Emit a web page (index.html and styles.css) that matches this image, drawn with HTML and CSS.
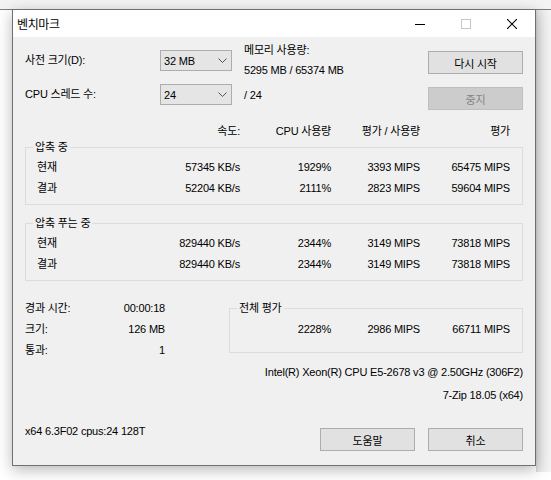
FILE: index.html
```html
<!DOCTYPE html>
<html lang="ko">
<head>
<meta charset="utf-8">
<title>벤치마크</title>
<link rel="stylesheet" href="styles.css">
</head>
<body>
<div class="desk-top"></div>
<div class="desk-right"></div>
<div class="window">
  <div class="titlebar">
    <span class="title">벤치마크</span>
    <div class="caps">
      <span class="cap"><svg width="10" height="10" viewBox="0 0 10 10"><path d="M0 5.5H10" stroke="#000" stroke-width="1"/></svg></span>
      <span class="cap"><svg width="10" height="10" viewBox="0 0 10 10"><rect x="0.5" y="0.5" width="9" height="9" fill="none" stroke="#c6c6c6" stroke-width="1"/></svg></span>
      <span class="cap"><svg width="10" height="10" viewBox="0 0 10 10"><path d="M0 0L10 10M10 0L0 10" stroke="#000" stroke-width="1.1"/></svg></span>
    </div>
  </div>
  <div class="client">
    <div class="row row1">
      <div class="lbl">사전 크기(D):</div>
      <div class="combo"><span>32 MB</span><svg class="chev" width="9" height="5" viewBox="0 0 9 5"><path d="M0.5 0.5L4.5 4.5L8.5 0.5" fill="none" stroke="#555" stroke-width="1"/></svg></div>
      <div class="mem mem1"><div>메모리 사용량:</div><div>5295 MB / 65374 MB</div></div>
      <div class="btn btn-top1">다시 시작</div>
    </div>
    <div class="row row2">
      <div class="lbl">CPU 스레드 수:</div>
      <div class="combo"><span>24</span><svg class="chev" width="9" height="5" viewBox="0 0 9 5"><path d="M0.5 0.5L4.5 4.5L8.5 0.5" fill="none" stroke="#555" stroke-width="1"/></svg></div>
      <div class="mem mem2">/ 24</div>
      <div class="btn btn-top2 disabled">중지</div>
    </div>

    <div class="grid head">
      <span></span><span>속도:</span><span>CPU 사용량</span><span>평가 / 사용량</span><span>평가</span>
    </div>

    <div class="group g1">
      <span class="legend">압축 중</span>
      <div class="grid gi"><span>현재</span><span>57345 KB/s</span><span>1929%</span><span>3393 MIPS</span><span>65475 MIPS</span></div>
      <div class="grid gi"><span>결과</span><span>52204 KB/s</span><span>2111%</span><span>2823 MIPS</span><span>59604 MIPS</span></div>
    </div>

    <div class="group g2">
      <span class="legend">압축 푸는 중</span>
      <div class="grid gi"><span>현재</span><span>829440 KB/s</span><span>2344%</span><span>3149 MIPS</span><span>73818 MIPS</span></div>
      <div class="grid gi"><span>결과</span><span>829440 KB/s</span><span>2344%</span><span>3149 MIPS</span><span>73818 MIPS</span></div>
    </div>

    <div class="bottom">
      <div class="info">
        <span>경과 시간:</span><span class="v">00:00:18</span>
        <span>크기:</span><span class="v">126 MB</span>
        <span>통과:</span><span class="v">1</span>
      </div>
      <div class="group g3">
        <span class="legend">전체 평가</span>
        <div class="grid3"><span>2228%</span><span>2986 MIPS</span><span>66711 MIPS</span></div>
      </div>
    </div>

    <div class="rline cpu">Intel(R) Xeon(R) CPU E5-2678 v3 @ 2.50GHz (306F2)</div>
    <div class="rline ver">7-Zip 18.05 (x64)</div>

    <div class="footer">
      <div class="sys">x64 6.3F02 cpus:24 128T</div>
      <div class="fbtns">
        <div class="btn">도움말</div>
        <div class="btn">취소</div>
      </div>
    </div>
  </div>
</div>
</body>
</html>
```

FILE: styles.css
```css
html, body {
  margin: 0;
  padding: 0;
}
body {
  width: 551px;
  height: 480px;
  background: #ffffff;
  position: relative;
  overflow: hidden;
  font-family: "Liberation Sans", "Noto Sans CJK KR", sans-serif;
  font-size: 11px;
  letter-spacing: -0.2px;
  color: #000;
}
.desk-top {
  height: 9px;
  background: #f3f3f3;
  border-bottom: 1px solid #7e7e7e;
}
.desk-right {
  position: absolute;
  left: 536px;
  top: 10px;
  width: 15px;
  height: 462px;
  background: linear-gradient(to right, #d6d6d6 0, #e6e6e6 2px, #eeeeee 8px, #f4f4f4 100%);
}
.window {
  position: absolute;
  left: 12px;
  top: 9px;
  width: 524px;
  height: 457px;
  box-sizing: border-box;
  border: 1px solid #707070;
  background: #f0f0f0;
  box-shadow: 0 4px 14px rgba(0, 0, 0, 0.28);
  display: flex;
  flex-direction: column;
}
.titlebar {
  height: 27px;
  background: #ffffff;
  display: flex;
  align-items: center;
  flex: none;
}
.title {
  padding-left: 4px;
  font-size: 12px;
  letter-spacing: -0.4px;
  flex: 1;
}
.caps {
  display: flex;
  height: 27px;
}
.cap {
  width: 46px;
  height: 27px;
  display: flex;
  align-items: center;
  justify-content: center;
}
.cap svg {
  display: block;
}
.client {
  flex: 1;
  padding: 0 12px;
  display: flex;
  flex-direction: column;
}
.row {
  display: flex;
  align-items: flex-start;
}
.row1 {
  margin-top: 13px;
  height: 34px;
}
.row2 {
  height: 26px;
}
.lbl {
  width: 135px;
  line-height: 20px;
  white-space: nowrap;
}
.combo {
  width: 72px;
  height: 21px;
  box-sizing: border-box;
  border: 1px solid #adadad;
  background: #e5e5e5;
  display: flex;
  align-items: center;
  padding: 0 4px 0 3px;
}
.combo span {
  flex: 1;
}
.chev {
  display: block;
}
.mem {
  flex: 1;
  margin-left: 12px;
  line-height: 20px;
  white-space: nowrap;
}
.mem1 {
  margin-top: -10px;
}
.mem2 {
  margin-top: 1px;
}
.btn {
  width: 95px;
  height: 23px;
  box-sizing: border-box;
  border: 1px solid #adadad;
  background: #e1e1e1;
  display: flex;
  align-items: center;
  justify-content: center;
  white-space: nowrap;
}
.btn-top1 {
  margin-top: 1px;
}
.btn-top2 {
  margin-top: 3px;
}
.btn.disabled {
  background: #cccccc;
  border-color: #bfbfbf;
  color: #838383;
}
.grid {
  display: grid;
  grid-template-columns: 135px 80px 91px 89px 90px;
  line-height: 20px;
  white-space: nowrap;
}
.grid span {
  text-align: right;
}
.grid span:first-child {
  text-align: left;
}
.head {
  margin-top: 11px;
}
.group {
  position: relative;
  border: 1px solid #dcdcdc;
}
.legend {
  position: absolute;
  left: 7px;
  top: -8px;
  padding: 0 2px;
  line-height: 14px;
  background: #f0f0f0;
  white-space: nowrap;
}
.g1, .g2 {
  padding: 9px 0 5px;
}
.g1 {
  margin-top: 6px;
}
.g2 {
  margin-top: 18px;
}
.gi {
  grid-template-columns: 134px 80px 91px 89px 90px;
  line-height: 21px;
}
.gi span:first-child {
  padding-left: 11px;
}
.bottom {
  margin-top: 17px;
  height: 63px;
  display: flex;
  align-items: flex-start;
}
.info {
  width: 140px;
  display: grid;
  grid-template-columns: 1fr auto;
  line-height: 21px;
  white-space: nowrap;
}
.info .v {
  text-align: right;
}
.g3 {
  margin-left: 64px;
  margin-top: 10px;
  width: 294px;
  box-sizing: border-box;
  padding: 10px 0 12px;
}
.grid3 {
  display: grid;
  grid-template-columns: 101px 89px 90px;
  line-height: 21px;
  white-space: nowrap;
}
.grid3 span {
  text-align: right;
}
.rline {
  text-align: right;
  line-height: 20px;
  white-space: nowrap;
}
.cpu {
  margin-top: 1px;
}
.ver {
  margin-top: 3px;
}
.footer {
  margin-top: 23px;
  display: flex;
  align-items: flex-start;
}
.sys {
  flex: 1;
  margin-top: -7px;
  line-height: 20px;
  white-space: nowrap;
}
.fbtns {
  display: flex;
  gap: 13px;
}
```
